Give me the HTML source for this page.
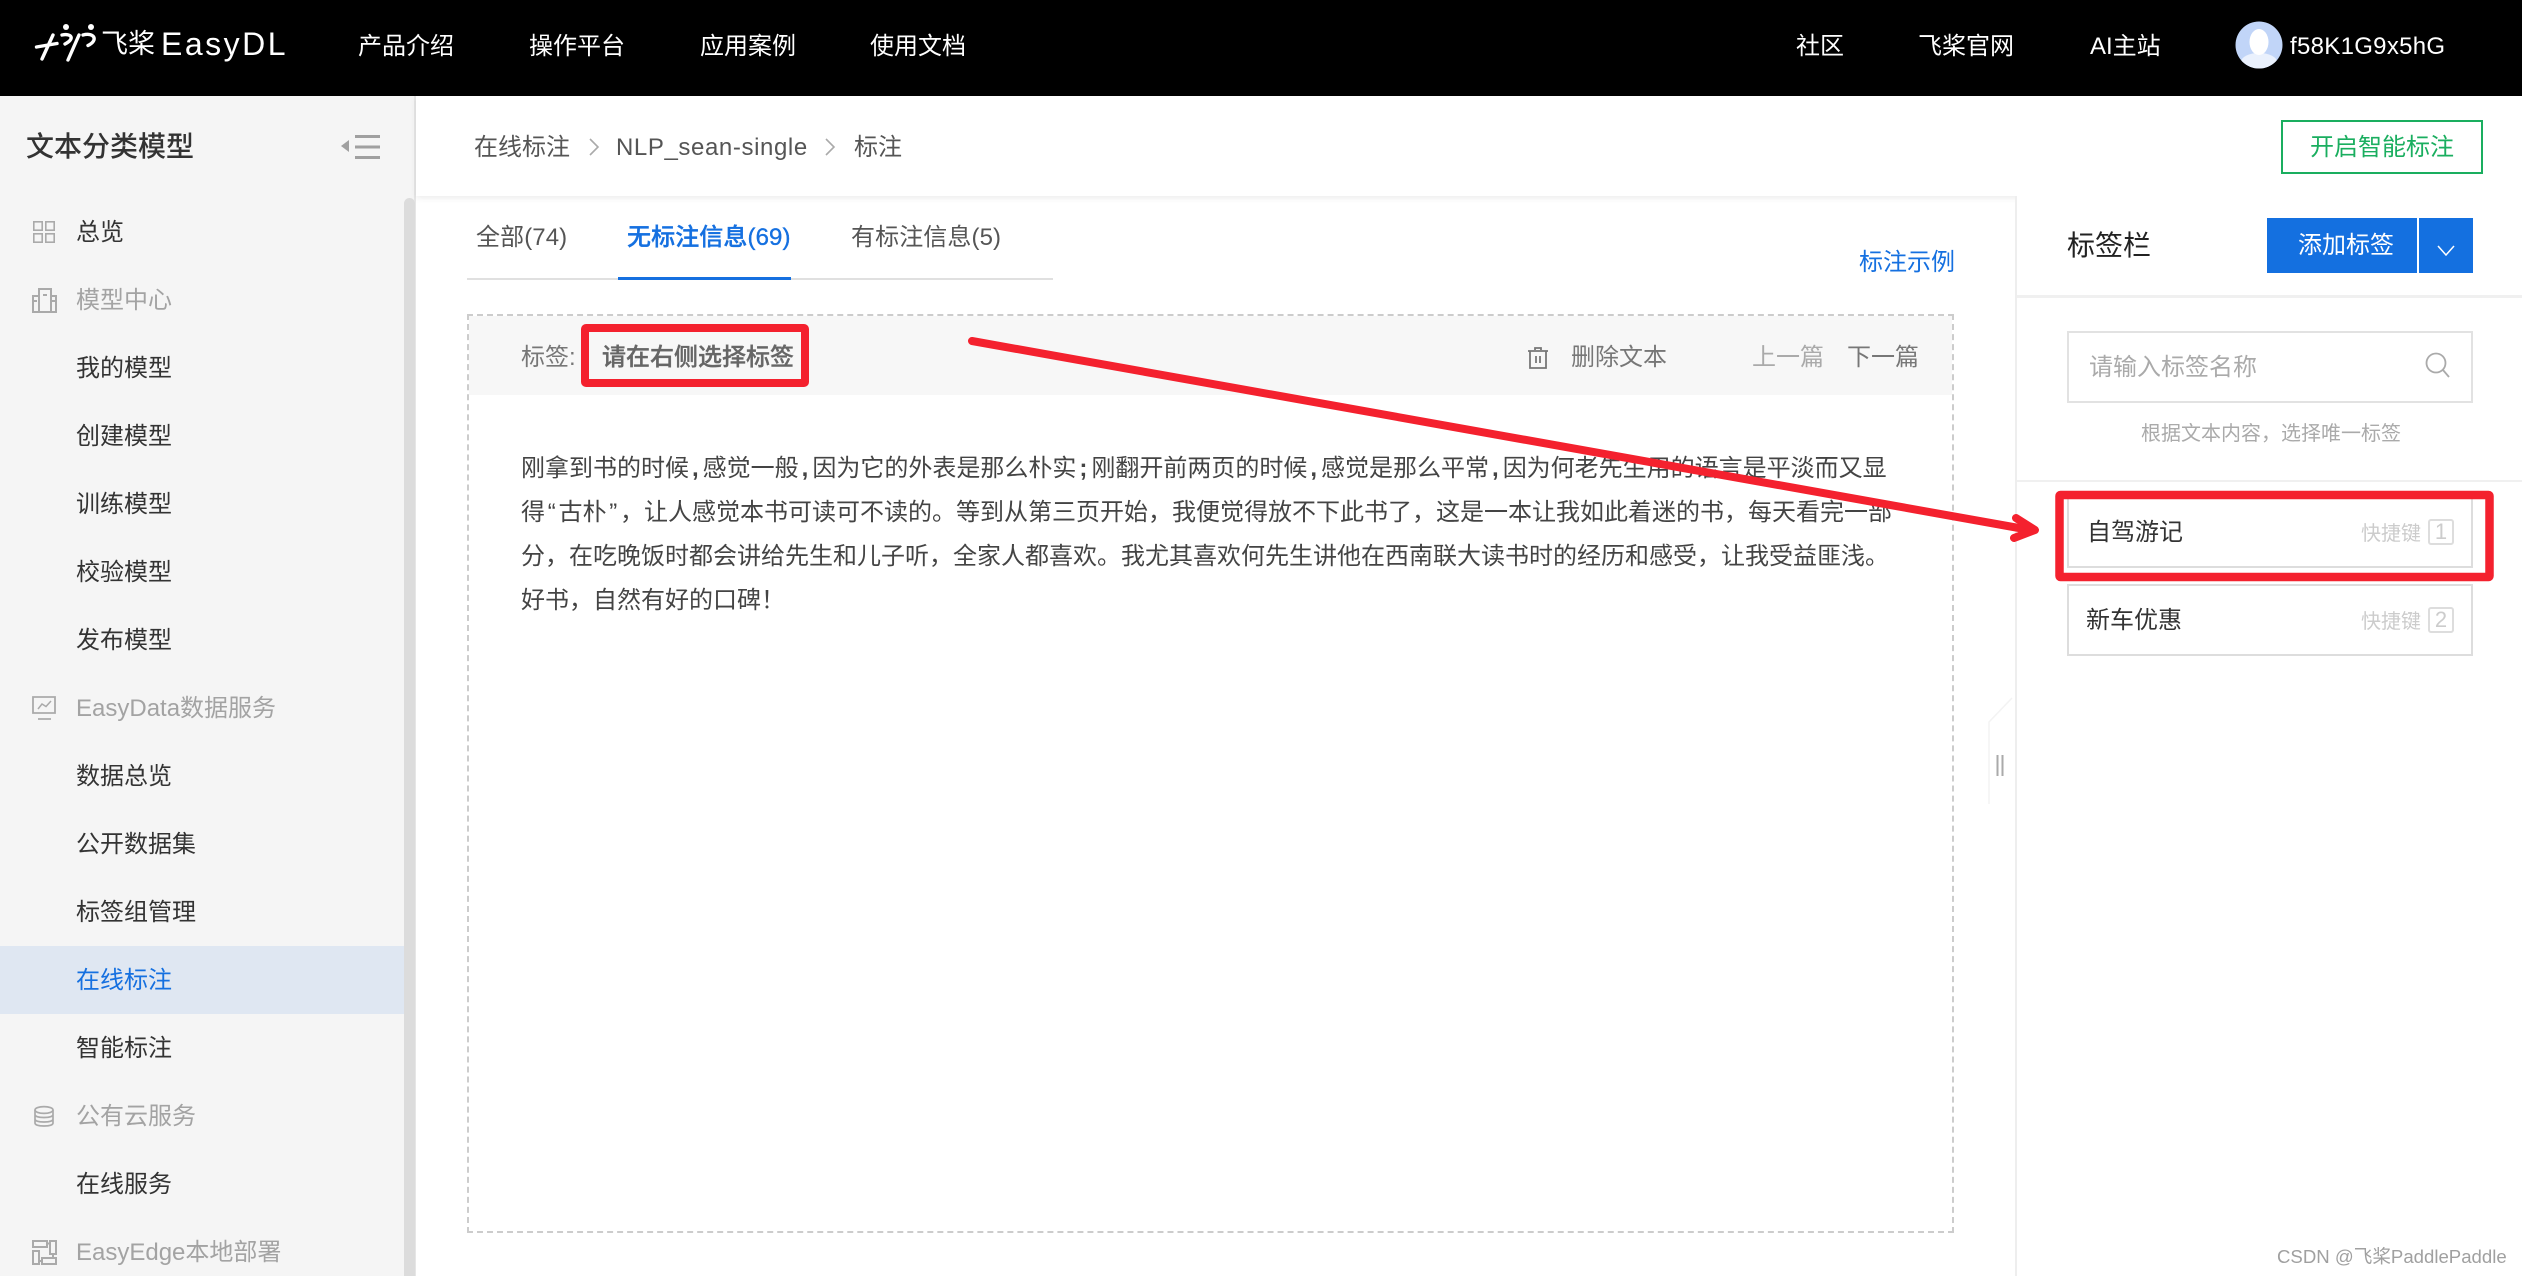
<!DOCTYPE html>
<html lang="zh-CN"><head><meta charset="utf-8"><title>EasyDL</title>
<style>
html,body{margin:0;padding:0;background:#fff}
body{position:relative;width:2522px;height:1276px;overflow:hidden;font-family:"Liberation Sans","Noto Sans CJK SC",sans-serif;font-size:24px;color:#333}
.a{position:absolute}
.t{position:absolute;white-space:nowrap;line-height:40px;height:40px;margin-top:1px}
.w{color:#fff}.g{color:#a3a3a3}.d{color:#333}
.c{font-weight:700;padding-left:3px;letter-spacing:4px}
.q{margin:0 2.750px}
</style></head><body>
<div class="a" style="left:0;top:0;width:2522px;height:96px;background:#000"></div>
<svg class="a" style="left:30px;top:18px" width="75" height="50" viewBox="30 18 75 50" fill="none" stroke="#fff" stroke-width="3.400" stroke-linecap="round">
<path d="M36.500 47L57 43.500M42 59L53 35M62 35C72 33 75 39 65 44M68 60L79 35M83 35C94 32 99 40 88 45.500"/>
<circle cx="66" cy="27" r="3" fill="#fff" stroke="none"/><circle cx="91" cy="27" r="3" fill="#fff" stroke="none"/></svg>
<div class="t w" style="left:101px;top:23px;font-size:27px">飞桨</div>
<div class="t w" style="left:161px;top:23px;font-size:32px;letter-spacing:2.500px">EasyDL</div>
<div class="t w" style="left:358px;top:26px">产品介绍</div>
<div class="t w" style="left:529px;top:26px">操作平台</div>
<div class="t w" style="left:700px;top:26px">应用案例</div>
<div class="t w" style="left:870px;top:26px">使用文档</div>
<div class="t w" style="left:1796px;top:26px">社区</div>
<div class="t w" style="left:1918px;top:26px">飞桨官网</div>
<div class="t w" style="left:2090px;top:26px">AI主站</div>
<svg class="a" style="left:2235px;top:21px" width="48" height="48" viewBox="0 0 48 48"><defs><clipPath id="cp"><circle cx="24" cy="24" r="23.500"/></clipPath></defs><circle cx="24" cy="24" r="23.500" fill="#c1d5f8"/><g clip-path="url(#cp)"><ellipse cx="24" cy="41" rx="18" ry="9" fill="#eaf1fd"/><ellipse cx="24" cy="21" rx="9.500" ry="13" fill="#fff"/></g></svg>
<div class="t w" style="left:2290px;top:26px;letter-spacing:.3px">f58K1G9x5hG</div>

<div class="a" style="left:0;top:96px;width:415px;height:1180px;background:#f5f5f5"></div>
<div class="a" style="left:414px;top:96px;width:2px;height:1180px;background:#e6e6e6"></div>
<div class="a" style="left:404px;top:198px;width:11px;height:1078px;background:#dcdcdc;border-radius:6px 6px 0 0"></div>
<div class="t" style="left:26px;top:126px;font-size:28px;font-weight:500;color:#333">文本分类模型</div>
<svg class="a" style="left:340px;top:134px" width="42" height="26"><path d="M1 12L9 6V18Z" fill="#a0a0a0"/><path d="M15 2.500H40M15 13H40M15 23.500H40" stroke="#a0a0a0" stroke-width="3"/></svg>

<div class="a" style="left:0;top:946px;width:404px;height:68px;background:#dfe7f2"></div>
<div class="t d" style="left:76px;top:212px">总览</div>
<div class="t g" style="left:76px;top:280px">模型中心</div>
<div class="t d" style="left:76px;top:348px">我的模型</div>
<div class="t d" style="left:76px;top:416px">创建模型</div>
<div class="t d" style="left:76px;top:484px">训练模型</div>
<div class="t d" style="left:76px;top:552px">校验模型</div>
<div class="t d" style="left:76px;top:620px">发布模型</div>
<div class="t g" style="left:76px;top:688px">EasyData数据服务</div>
<div class="t d" style="left:76px;top:756px">数据总览</div>
<div class="t d" style="left:76px;top:824px">公开数据集</div>
<div class="t d" style="left:76px;top:892px">标签组管理</div>
<div class="t" style="left:76px;top:960px;color:#1570e0">在线标注</div>
<div class="t d" style="left:76px;top:1028px">智能标注</div>
<div class="t g" style="left:76px;top:1096px">公有云服务</div>
<div class="t d" style="left:76px;top:1164px">在线服务</div>
<div class="t g" style="left:76px;top:1232px">EasyEdge本地部署</div>

<svg class="a" style="left:30px;top:218px" width="28" height="28" fill="none" stroke="#aaa" stroke-width="1.600"><rect x="3.800" y="3.800" width="8.400" height="8.400"/><rect x="15.800" y="3.800" width="8.400" height="8.400"/><rect x="3.800" y="15.800" width="8.400" height="8.400"/><rect x="15.800" y="15.800" width="8.400" height="8.400"/></svg>
<svg class="a" style="left:30px;top:286px" width="28" height="28" fill="none" stroke="#aaa" stroke-width="2"><path d="M3 26H26V10H21V3H9V10H3Z"/><path d="M9 10V26M21 10V26M3 15H7M22 15H26M13 9H17"/></svg>
<svg class="a" style="left:30px;top:694px" width="28" height="28" fill="none" stroke="#aaa" stroke-width="1.800"><path d="M3 3H25V19H3ZM8 25H21"/><path d="M8 15L12 10L16 12.500L21 7" stroke-width="1.500"/></svg>
<svg class="a" style="left:30px;top:1102px" width="28" height="28" fill="none" stroke="#aaa" stroke-width="1.700"><ellipse cx="14" cy="8" rx="9" ry="3.400"/><path d="M5 8V21C5 23 9 24 14 24S23 23 23 21V8M5 12.500C5 14.500 9 15.500 14 15.500S23 14.500 23 12.500M5 17C5 19 9 20 14 20S23 19 23 17"/></svg>
<svg class="a" style="left:30px;top:1238px" width="28" height="28" fill="none" stroke="#aaa" stroke-width="2"><rect x="3" y="3" width="14" height="6"/><rect x="20" y="3" width="6" height="13"/><rect x="3" y="13" width="6" height="13"/><rect x="12" y="20" width="14" height="6"/><path d="M17 5.500H20M23 16V20M9 23H12"/></svg>

<div class="a" style="left:416px;top:96px;width:2106px;height:100px;background:#fff;box-shadow:0 2px 6px rgba(0,0,0,.08)"></div>
<div class="t" style="left:474px;top:127px;color:#555">在线标注</div>
<svg class="a" style="left:587px;top:136px" width="14" height="22" fill="none" stroke="#aaa" stroke-width="1.600"><path d="M3 3L11 11L3 19"/></svg>
<div class="t" style="left:616px;top:127px;color:#555;letter-spacing:.6px">NLP_sean-single</div>
<svg class="a" style="left:823px;top:136px" width="14" height="22" fill="none" stroke="#aaa" stroke-width="1.600"><path d="M3 3L11 11L3 19"/></svg>
<div class="t" style="left:854px;top:127px;color:#555">标注</div>
<div class="a" style="left:2281px;top:120px;width:198px;height:50px;border:2px solid #1aae5f"></div>
<div class="t" style="left:2310px;top:127px;color:#1aae5f">开启智能标注</div>

<div class="t" style="left:476px;top:217px;color:#555;letter-spacing:.1px">全部(74)</div>
<div class="t" style="left:627px;top:217px;color:#1570e0;font-weight:500;letter-spacing:.1px;-webkit-text-stroke:.35px #1570e0">无标注信息(69)</div>
<div class="t" style="left:851px;top:217px;color:#555;letter-spacing:.1px">有标注信息(5)</div>
<div class="a" style="left:467px;top:278px;width:586px;height:2px;background:#e0e0e0"></div>
<div class="a" style="left:618px;top:277px;width:173px;height:3px;background:#1570e0"></div>
<div class="t" style="left:1859px;top:242px;color:#1570e0">标注示例</div>

<div class="a" style="left:467px;top:314px;width:1483px;height:915px;border:2px dashed #ccc"></div>
<div class="a" style="left:469px;top:316px;width:1483px;height:79px;background:#f7f7f7"></div>
<div class="t" style="left:521px;top:337px;color:#777">标签:</div>
<div class="t" style="left:602px;top:337px;color:#666;font-weight:500;-webkit-text-stroke:.35px #666">请在右侧选择标签</div>
<svg class="a" style="left:1526px;top:345px" width="24" height="26" fill="none" stroke="#777" stroke-width="1.800"><path d="M2 6H22M9 5V3H15V5M4 6V23H20V6M10 11V18M14 11V18"/></svg>
<div class="t" style="left:1571px;top:337px;color:#777">删除文本</div>
<div class="t" style="left:1752px;top:337px;color:#aaa">上一篇</div>
<div class="t" style="left:1847px;top:337px;color:#777">下一篇</div>

<div class="t" style="left:521px;top:448px;color:#444">刚拿到书的时候<span class="c">,</span>感觉一般<span class="c">,</span>因为它的外表是那么朴实<span class="c">;</span>刚翻开前两页的时候<span class="c">,</span>感觉是那么平常<span class="c">,</span>因为何老先生用的语言是平淡而又显</div>
<div class="t" style="left:521px;top:492px;color:#444">得<span class="q">“</span>古朴<span class="q">”</span>，让人感觉本书可读可不读的。等到从第三页开始，我便觉得放不下此书了，这是一本让我如此着迷的书，每天看完一部</div>
<div class="t" style="left:521px;top:536px;color:#444">分，在吃晚饭时都会讲给先生和儿子听，全家人都喜欢。我尤其喜欢何先生讲他在西南联大读书时的经历和感受，让我受益匪浅。</div>
<div class="t" style="left:521px;top:580px;color:#444">好书，自然有好的口碑！</div>

<div class="a" style="left:2015px;top:196px;width:507px;height:1080px;background:#fff;border-left:2px solid #eee"></div>
<div class="t" style="left:2067px;top:225px;font-size:28px;color:#222">标签栏</div>
<div class="a" style="left:2267px;top:218px;width:150px;height:55px;background:#1470e0"></div>
<div class="a" style="left:2419px;top:218px;width:54px;height:55px;background:#1470e0"></div>
<div class="t w" style="left:2298px;top:225px">添加标签</div>
<svg class="a" style="left:2436px;top:244px" width="20" height="14" fill="none" stroke="#fff" stroke-width="1.500"><path d="M2 2L10 11L18 2"/></svg>
<div class="a" style="left:2017px;top:295px;width:505px;height:3px;background:#f0f0f0"></div>
<div class="a" style="left:2067px;top:331px;width:402px;height:68px;border:2px solid #e2e2e2"></div>
<div class="t" style="left:2089px;top:347px;color:#aaa">请输入标签名称</div>
<svg class="a" style="left:2423px;top:351px" width="28" height="28" fill="none" stroke="#aaa" stroke-width="1.800"><circle cx="13" cy="12" r="9.500"/><path d="M20 19L26 26"/></svg>
<div class="t" style="left:2141px;top:413px;font-size:20px;color:#aaa">根据文本内容，选择唯一标签</div>
<div class="a" style="left:2017px;top:480px;width:505px;height:2px;background:#f0f0f0"></div>

<div class="a" style="left:2067px;top:495px;width:402px;height:69px;border:2px solid #ddd"></div>
<div class="a" style="left:2067px;top:584px;width:402px;height:68px;border:2px solid #ddd"></div>
<div class="t" style="left:2087px;top:512px;color:#333">自驾游记</div>
<div class="t" style="left:2086px;top:600px;color:#333">新车优惠</div>
<div class="t" style="left:2361px;top:513px;font-size:20px;color:#ccc">快捷键</div>
<div class="t" style="left:2361px;top:601px;font-size:20px;color:#ccc">快捷键</div>
<div class="a" style="left:2428px;top:519px;width:22px;height:22px;border:2px solid #ddd;border-radius:3px;color:#ccc;text-align:center;line-height:22px;font-size:22px">1</div>
<div class="a" style="left:2428px;top:607px;width:22px;height:22px;border:2px solid #ddd;border-radius:3px;color:#ccc;text-align:center;line-height:22px;font-size:22px">2</div>

<svg class="a" style="left:1986px;top:694px" width="30" height="118"><path d="M26 4L3 28V110" fill="none" stroke="#f3f3f3" stroke-width="1.500"/><path d="M11.500 61V82M16.500 61V82" stroke="#aaa" stroke-width="2"/></svg>

<svg class="a" style="left:0;top:0;pointer-events:none" width="2522" height="1276" fill="none" stroke="#f4212e" stroke-linejoin="round" stroke-linecap="round">
<rect x="585" y="328" width="220" height="55" rx="1" stroke-width="8"/>
<rect x="2059.500" y="495" width="430" height="82" rx="1" stroke-width="8.500"/>
<path d="M972 341L2030 530" stroke-width="8"/>
<path d="M2016 518L2035 530L2014 538" stroke-width="8"/>
</svg>
<div class="t" style="left:2277px;top:1236px;font-size:18.600px;color:#a0a0a0">CSDN @飞桨PaddlePaddle</div>
</body></html>
